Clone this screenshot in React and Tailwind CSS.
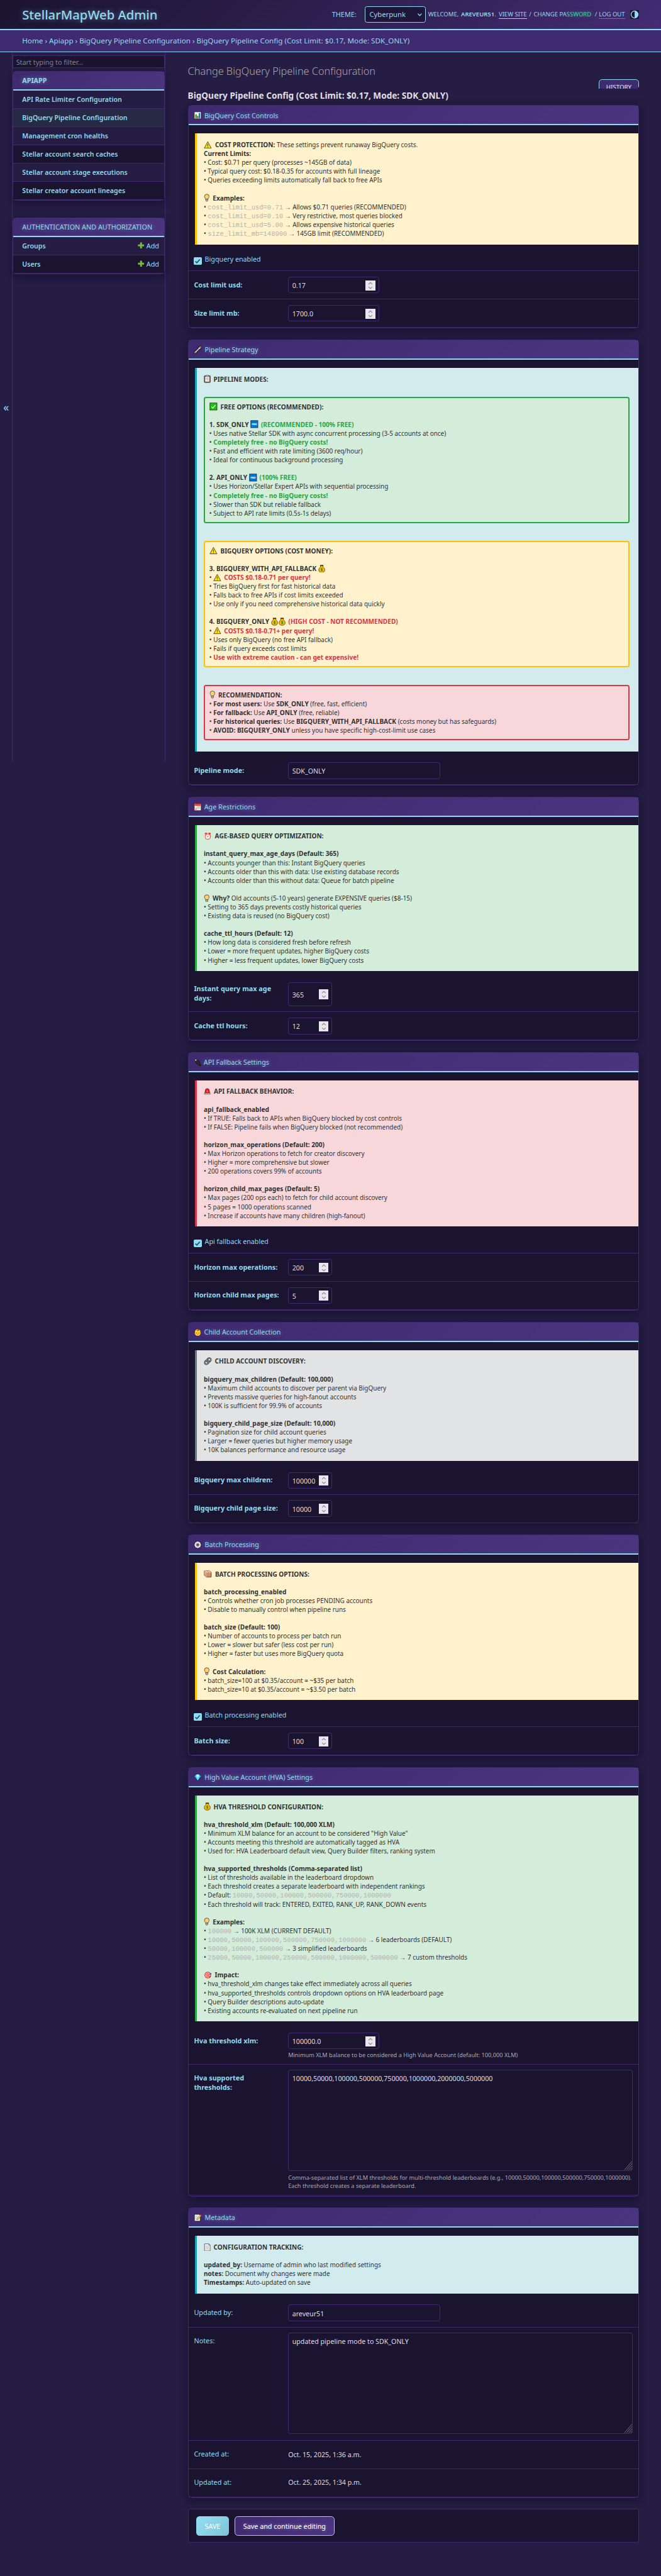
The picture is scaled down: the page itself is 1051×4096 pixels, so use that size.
import React from "react";

/* ---------- icons ---------- */
const Svg = ({ w, children, box = "0 0 16 16", size = "h-[14.5px] w-[14.5px]" }) => (
  <span className="inline-flex h-[16px] items-center align-top" style={{ width: w }}>
    <svg viewBox={box} className={`${size} shrink-0`}>{children}</svg>
  </span>
);
const Em = ({ w, children }) => (
  <span
    className="inline-block h-[16px] align-top text-[11.6px] leading-[17px] whitespace-nowrap font-normal"
    style={{ width: w, textShadow: "none" }}
  >
    {children}
  </span>
);
const Warn = ({ w = 20 }) => (
  <Svg w={w}>
    <path d="M8 1.6 15 14.6H1Z" fill="#fce100" stroke="#3b3a39" strokeWidth="1.1" strokeLinejoin="round" />
    <path d="M8 6v4.6M8 12v1.3" stroke="#3b3a39" strokeWidth="1.3" />
  </Svg>
);
const Check = ({ w = 20 }) => (
  <Svg w={w}>
    <rect x="1" y="1" width="14" height="14" fill="#16c60c" stroke="#1b3a1b" strokeWidth="1.1" />
    <path d="M4 8.4 6.8 11 12 5.2" fill="none" stroke="#fff" strokeWidth="1.6" />
  </Svg>
);
const Free = ({ w = 16 }) => (
  <Svg w={w}>
    <rect x="1" y="1" width="14" height="14" fill="#0078d7" stroke="#12304d" strokeWidth="1.1" />
    <text x="8" y="9.8" textAnchor="middle" fontSize="4.6" fontWeight="800" fill="#fff">FREE</text>
  </Svg>
);
const Bulb = ({ w = 16 }) => (
  <Svg w={w} box="0 0 12 16" size="h-[14.5px] w-[10.9px]">
    <path d="M6 1a4.500 4.500 0 0 1 4.600 4.600c0 2.400-2 3.300-2.200 5.400H3.600C3.400 8.900 1.400 8 1.400 5.600A4.500 4.500 0 0 1 6 1Z" fill="#ffd071" stroke="#4a3b1c" strokeWidth="1" />
    <path d="M4 11h4v2.700L7.200 15H4.800L4 13.700Z" fill="#c9c9c9" stroke="#333" strokeWidth=".9" />
  </Svg>
);
const Clipboard = ({ w = 17.7 }) => (
  <Svg w={w} box="0 0 14 16" size="h-[14.5px] w-[12.7px]">
    <rect x="1" y="1.800" width="12" height="13.400" rx="1" fill="#8e562e" stroke="#3e352f" strokeWidth="1" />
    <path d="M2.800 3.600h8.400v10H2.800Z" fill="#f2f2f2" />
    <rect x="4.300" y=".7" width="5.400" height="3" rx=".8" fill="#b8b8b8" stroke="#444" strokeWidth=".7" />
    <path d="M4.200 6.500h5.600M4.200 8.500h5.600M6 10.500h3.800" stroke="#9a9a9a" strokeWidth=".9" />
  </Svg>
);
const Page = ({ w = 17.6 }) => (
  <Svg w={w} box="0 0 14 16" size="h-[14.5px] w-[12.7px]">
    <path d="M1.500 1h8.600l2.600 2.500V15H1.500Z" fill="#f2f2f2" stroke="#4a4a4a" strokeWidth="1" />
    <path d="M10 1v2.700h2.700" fill="none" stroke="#4a4a4a" strokeWidth=".8" />
    <path d="M3.600 5.500h6.800M3.600 7.500h6.800M3.600 9.500h6.800M3.600 11.500h6.800" stroke="#bdbdbd" strokeWidth="1" />
  </Svg>
);
const Memo = ({ w = 20 }) => (
  <Svg w={w}>
    <path d="M1.500 1.200h9.800L13 3v11.800H1.500Z" fill="#f2f2f2" stroke="#222" strokeWidth="1" />
    <path d="M3.500 5h5M3.500 7.500h4.500M3.500 10h3" stroke="#b0b0b0" strokeWidth="1" />
    <path d="M6 12.300 6.600 10 13 2.300l2 1.700-6.500 7.600Z" fill="#ffc83d" stroke="#5a4210" strokeWidth=".6" />
    <path d="m13 2.300.9-1.100 2 1.700L15 4Z" fill="#d13438" />
  </Svg>
);
const Chart = ({ w = 19.2 }) => (
  <Svg w={w}>
    <rect x="1" y="1" width="14" height="14" rx=".6" fill="#f2f2f2" stroke="#2a2733" strokeWidth="1.400" />
    <path d="M3.200 6H6v8H3.200Z" fill="#16a80c" />
    <path d="M6.700 9h2.700v5H6.700Z" fill="#e03a20" />
    <path d="M10.100 3.500h2.700V14h-2.700Z" fill="#0078d7" />
  </Svg>
);
const Wrench = ({ w = 20 }) => (
  <Svg w={w}>
    <g fill="none" strokeLinecap="round">
      <path d="M4.300 11.700 11.700 4.300" stroke="#17151c" strokeWidth="4.400" />
      <path d="M13.800 1.600c-2.900-.6-4.800 1.900-3.600 4.200M14.400 2.200c.6 2.900-1.900 4.800-4.200 3.600" stroke="#17151c" strokeWidth="2.800" />
      <path d="M2.200 14.400c-1.400-1.600-.2-4 2-3.600M1.600 13.800c1.600 1.400 4 .2 3.600-2" stroke="#17151c" strokeWidth="2.800" />
      <path d="M4.300 11.700 11.700 4.300" stroke="#cfcfcf" strokeWidth="2.200" />
      <path d="M13.600 1.900c-2.600-.4-4 1.700-3.200 3.700M14.100 2.400c.4 2.600-1.700 4-3.700 3.200" stroke="#cfcfcf" strokeWidth="1.200" />
      <path d="M2.300 14c-1.100-1.300-.2-3 1.700-2.700M2 13.700c1.300 1.100 3 .2 2.700-1.700" stroke="#cfcfcf" strokeWidth="1.200" />
    </g>
  </Svg>
);
const Calendar = ({ w = 19 }) => (
  <Svg w={w}>
    <rect x="1" y="1" width="14" height="14" rx=".6" fill="#f2f2f2" stroke="#2a2024" strokeWidth="1.300" />
    <path d="M1.600 1.600h12.800v3.700H1.600Z" fill="#e83a17" />
    <path d="M7 7h5.800M3.400 9h9.400M3.400 11h9.400" stroke="#c4c4c4" strokeWidth="1.400" />
    <path d="M3.400 11.300h2.200v1.900H3.400Z" fill="#e05a4a" />
  </Svg>
);
const Siren = ({ w = 18.3 }) => (
  <Svg w={w} box="0 0 14 16" size="h-[14.5px] w-[12.7px]">
    <path d="M2 11.800 3.300 5C3.600 3.300 5 2.400 7 2.400s3.400.9 3.700 2.600L12 11.800Z" fill="#e81224" stroke="#4d1a1f" strokeWidth=".9" />
    <path d="M5 9.500 5.800 6h2.400L9 9.500Z" fill="#ff6b4a" />
    <path d="M1 11.500h12v2.300H1Z" fill="#c8c8c8" stroke="#6a6a6a" strokeWidth=".8" />
  </Svg>
);
const Box = ({ w = 20.3 }) => (
  <Svg w={w}>
    <path d="M1 2.500 10.500 1.600 15 5v9.600H5.500L1 11Z" fill="#c69268" stroke="#4a382c" strokeWidth="1" strokeLinejoin="round" />
    <path d="M1 2.500 5.500 5.600H15L10.500 1.600Z" fill="#ecc9ad" />
    <path d="M1 2.500 5.500 5.600v9L1 11Z" fill="#dca78a" />
    <path d="M7 2.100 10.500 5.600M2 9.700l2 1.500" stroke="#e2506a" strokeWidth="1.100" />
  </Svg>
);
const Gem = ({ w = 19.7 }) => (
  <Svg w={w}>
    <path d="M4 1.500h8l3.200 4.200L8 15 .8 5.700Z" fill="#1bb0f2" stroke="#0d2238" strokeWidth="1.100" strokeLinejoin="round" />
    <path d="M5.500 2h5l1 3.700L8 13.500 4.500 5.700Z" fill="#7fe0ff" />
    <path d="M6.500 2.200h3l.6 3.400H5.900Z" fill="#e4faff" />
  </Svg>
);
const Bag = ({ w = 14.3 }) => (
  <Svg w={w} box="1 0 14 16" size="h-[14.5px] w-[12.7px]">
    <path d="M5 1h6l-.6 3.4C12.6 5.6 14 8 14 10.600c0 2.800-2 4.700-6 4.700s-6-1.900-6-4.700C2 8 3.400 5.600 5.600 4.400Z" fill="#ffb900" stroke="#4d3a10" strokeWidth="1" />
    <path d="M5.200 1h5.600v1.600H5.200Z" fill="#3b2b0c" />
    <path d="M9.800 7.900c-.5-.8-3.400-1-3.400.5 0 1.700 3.400.8 3.400 2.500 0 1.500-3 1.400-3.600.4M8 6.500v6.300" fill="none" stroke="#10893e" strokeWidth="1.200" />
  </Svg>
);
const Gear = ({ w = 20 }) => (
  <Svg w={w}>
    <circle cx="8" cy="8" r="6" fill="#e6e6e6" stroke="#1c1c1c" strokeWidth="3" strokeDasharray="3 1.700" />
    <circle cx="8" cy="8" r="5.600" fill="#e6e6e6" stroke="#e6e6e6" strokeWidth="1.400" />
    <circle cx="8" cy="8" r="2.900" fill="#9a9a9a" stroke="#555" strokeWidth=".8" />
    <circle cx="8" cy="8" r="1.300" fill="#1c1c1c" />
  </Svg>
);
const Plug = ({ w = 18 }) => (
  <Svg w={w}>
    <path d="M1.500 2.500 4 .8l3 3-2.500 2.300Z" fill="#bdbdbd" stroke="#161616" strokeWidth="1" />
    <path d="M4 6.200 7.200 3.400c2.200.6 4.500 3 5.300 6.400l1.700 5.200-2.500.2-1.600-2.600C7 12.200 4.600 9.600 4 6.200Z" fill="#2b2b2b" stroke="#0c0c0c" strokeWidth="1" />
  </Svg>
);
const Chain = ({ w = 20 }) => (
  <Svg w={w}>
    <g fill="none" transform="rotate(-45 8 8)">
      <rect x=".6" y="4.600" width="9" height="6.800" rx="3.400" stroke="#222" strokeWidth="2.600" />
      <rect x="6.400" y="4.600" width="9" height="6.800" rx="3.400" stroke="#222" strokeWidth="2.600" />
      <rect x=".6" y="4.600" width="9" height="6.800" rx="3.400" stroke="#b5b5b5" strokeWidth="1" />
      <rect x="6.400" y="4.600" width="9" height="6.800" rx="3.400" stroke="#b5b5b5" strokeWidth="1" />
    </g>
  </Svg>
);

/* ---------- text helpers ---------- */
const B = ({ children }) => <b className="text-[11.45px] font-bold">{children}</b>;
const G = ({ children }) => <b className="text-[11.45px] font-bold text-[#28a745]">{children}</b>;
const R = ({ children }) => <b className="text-[11.45px] font-bold text-[#dc3545]">{children}</b>;
const C = ({ children }) => (
  <code className="font-['Liberation_Mono',monospace] text-[11.93px] leading-none text-[#b4b2ae]">{children}</code>
);
const Lines = ({ items }) =>
  items.map((l, i) => (
    <div key={i} className="h-[16px] text-[11.3px] leading-[17.200px] whitespace-nowrap text-[#333333]">
      {l}
    </div>
  ));

const infoTone = {
  yellow: "bg-[#fff2cd] border-[#ffc107]",
  blue: "bg-[#d1ebef] border-[#17a2b8]",
  green: "bg-[#d4ecda] border-[#28a745]",
  red: "bg-[#f7d7da] border-[#dc3545]",
  gray: "bg-[#e2e3e5] border-[#6c757d]",
};
const Info = ({ tone, children }) => (
  <div className={`mt-[15px] ml-[12px] border-l-4 pt-[12px] pr-[16px] pb-[12px] pl-[12.300px] ${infoTone[tone]}`}>{children}</div>
);
const SubBox = ({ tone, h, children }) => (
  <div className={`rounded-[4px] border-[2.300px] py-[7.800px] pl-[7.800px] ${h} ${infoTone[tone]}`}>{children}</div>
);

/* ---------- form pieces ---------- */
const Spinner = () => (
  <span className="-mt-[1px] flex h-[18px] w-[18px] items-center justify-center bg-[#e9e7ee]">
    <svg viewBox="0 0 18 18" className="h-[18px] w-[18px]" fill="none" stroke="#97939f" strokeWidth="1.500">
      <path d="M5.700 6.700 9 3.700l3.300 3M5.700 11.600 9 14.600l3.300-3" />
    </svg>
  </span>
);
const Field = ({ children, w, h = "h-[30px]", spin }) => (
  <div className={`flex items-center justify-between rounded-[4px] border border-[#3f2b70] pt-[2px] pr-[5px] pl-[6.300px] text-[12.120px] text-[#dedce4] ${w} ${h}`}>
    <span>{children}</span>
    {spin && <Spinner />}
  </div>
);
const Area = ({ children }) => (
  <div className="relative h-[182px] w-[622px] rounded-[4px] border border-[#3f2b70] px-[6.300px] pt-[6px] text-[12.120px] leading-[18px] text-[#dedce4]">
    {children}
    <svg viewBox="0 0 16 18" className="absolute right-0 bottom-0 h-[18px] w-[15px]" stroke="#a19daa" strokeWidth=".8">
      <path d="M1 18 16 1M5 18 16 5.500M9 18 16 10M13 18l3-3.500" />
    </svg>
  </div>
);
const Row = ({ label, first, h = "h-[51px]", firstH = "h-[61px]", light, labelPad = "h-[30px]", children }) => (
  <div className={`flex border-b border-[#3a2869] pl-[10px] ${first ? "pt-[20px] " + firstH : "pt-[10px] " + h}`}>
    <div
      className={`flex w-[170px] shrink-0 items-center pr-[14px] leading-[17px] text-[#92daee] ${labelPad} ${light ? "text-[12.300px]" : "text-[12.320px] font-bold"}`}
    >
      {label}
    </div>
    <div>{children}</div>
  </div>
);
const Tick = ({ label }) => (
  <div className="flex h-[48.500px] border-b border-[#3a2869] pt-[20px] pl-[10px]">
    <span className="mt-[3px] flex h-[14px] w-[14px] items-center justify-center rounded-[2px] bg-[#8fdcf2]">
      <svg viewBox="0 0 14 14" className="h-[14px] w-[14px]" fill="none" stroke="#1d4a5a" strokeWidth="1.900">
        <path d="M3 7.400 5.700 10 11 4" />
      </svg>
    </span>
    <span className="ml-[5.500px] h-[16px] text-[12.200px] leading-[15.500px] text-[#92daee]">{label}</span>
  </div>
);
const Card = ({ icon, title, h, children }) => (
  <section className={`mb-[20px] rounded-[8px] border border-[#3f2b70] bg-[#1b1430] shadow-[0_4px_15px_rgba(10,5,25,0.5)] ${h}`}>
    <h2 className="flex h-[35px] items-center border-b-[2.300px] border-[#8fdaf0] bg-linear-135 from-[#3f2a70] to-[#4c3580] pt-[2px] pl-[9.500px] text-[12.200px] text-[#92daee] [text-shadow:0_0_8px_rgba(146,218,238,0.500)]">
      <span className="flex leading-[16px]">
        {icon}
        {title}
      </span>
    </h2>
    {children}
  </section>
);

/* ---------- sidebar ---------- */
const Caption = ({ children, bold }) => (
  <div className={`flex h-[34px] items-center border-b-[2.300px] border-[#8fdaf0] bg-linear-135 from-[#3f2a70] to-[#4c3580] pt-[1px] pl-[16px] text-[#92daee] uppercase [text-shadow:0_0_8px_rgba(146,218,238,0.500)] ${bold ? "text-[12.200px] font-bold" : "text-[12.270px]"}`}>
    {children}
  </div>
);
const rowTone = { a: "bg-[#251d43]", b: "bg-[#1b1430]", on: "bg-[#262a45]" };
const NavRow = ({ children, tone, add }) => (
  <div className={`flex h-[33px] items-center justify-between border-b border-[#3f2b70] pt-[2px] pr-[8.500px] pl-[16px] text-[12.070px] text-[#92daee] ${rowTone[tone]}`}>
    <span className="font-semibold">{children}</span>
    {add && (
      <span className="flex items-center text-[12.300px]">
        <svg viewBox="0 0 12 12" className="mr-[4px] mb-[3px] h-[12px] w-[12px]">
          <path d="M4.300.5h3.400v3.800h3.800v3.400H7.700v3.800H4.300V7.700H.5V4.300h3.800Z" fill="#70bf2b" />
        </svg>
        Add
      </span>
    )}
  </div>
);

export default function App() {
  return (
    <div className="h-[4650px] w-[1193.100px] overflow-hidden bg-[#251d43] font-['Noto_Sans',sans-serif] text-[#dedce4] [zoom:0.8809]">
      <header className="flex h-[54px] items-center justify-between border-b-[2.300px] border-[#8fdaf0] bg-linear-135 from-[#1b1430] to-[#432c73] pr-[40px] pl-[40px] text-[#92daee]">
        <div className="pt-[1px] text-[22.970px] font-medium [text-shadow:0_0_10px_rgba(146,218,238,0.500)]">StellarMapWeb Admin</div>
        <div className="flex items-center text-[10.800px] whitespace-nowrap">
          <span className="w-[59px] text-[12.300px]">THEME:</span>
          <span className="mr-[4.500px] flex h-[30px] w-[110px] items-center justify-between rounded-[4px] border border-[#8fdaf0] bg-[#1f163a] pt-[1px] pr-[4.500px] pl-[7.500px] text-[12.800px]">
            Cyberpunk
            <svg viewBox="0 0 10 10" className="h-[10px] w-[10px]" fill="none" stroke="#92daee" strokeWidth="1.500">
              <path d="M1.500 3 5 6.500 8.500 3" />
            </svg>
          </span>
          <span className="w-[59.500px]">WELCOME,</span>
          <span className="w-[68px] font-semibold">
            AREVEUR51<span className="font-normal">.</span>
          </span>
          <span className="w-[51px] border-b border-[#8fdaf0] leading-[15px]">VIEW SITE</span>
          <span className="w-[12px] text-center">/</span>
          <span className="w-[107px]">
            CHANGE PA<span className="text-[#3fd6a0] [text-shadow:0_0_8px_rgba(40,200,130,0.600)]">SSWORD</span>
          </span>
          <span className="w-[11px] text-center">/</span>
          <span className="w-[47px] border-b border-[#7a6a9c] leading-[15px]">LOG OUT</span>
          <span className="ml-[9px] flex h-[16px] w-[16px] items-center justify-center bg-[#1b1430]">
            <svg viewBox="0 0 16 16" className="h-[16px] w-[16px]">
              <circle cx="8" cy="8" r="6.300" fill="none" stroke="#8fdaf0" strokeWidth="1.500" />
              <path d="M8 1.700a6.300 6.300 0 0 1 0 12.600Z" fill="#8fdaf0" />
            </svg>
          </span>
        </div>
      </header>
      <nav className="flex h-[40px] items-center border-b border-[#8fdaf0] bg-[#402a70] pt-[1px] pl-[40px] text-[13.250px] whitespace-nowrap text-[#92daee]">
        Home › Apiapp › BigQuery Pipeline Configuration › BigQuery Pipeline Config (Cost Limit: $0.17, Mode: SDK_ONLY)
      </nav>

      <div className="flex">
        <div className="flex h-[1281px] w-[23px] shrink-0 items-center justify-center border-r border-[#3f2b70] text-[20px] text-[#8fdaf0]">«</div>
        <aside className="h-[1281px] w-[276px] shrink-0 border-r border-[#3f2b70] pt-[6px] pr-px">
          <div className="mb-[5px] flex h-[23px] items-center border border-[#3f2b70] bg-[#1b1430] pt-[2px] pl-[5px] text-[12.330px] text-[#85808f]">
            Start typing to filter...
          </div>
          <div className="mb-[30.500px] h-[234px] rounded-[8px] border border-[#3f2b70] shadow-[0_4px_15px_rgba(10,5,25,0.400)]">
            <Caption bold>Apiapp</Caption>
            <NavRow tone="a">API Rate Limiter Configuration</NavRow>
            <NavRow tone="on">BigQuery Pipeline Configuration</NavRow>
            <NavRow tone="a">Management cron healths</NavRow>
            <NavRow tone="b">Stellar account search caches</NavRow>
            <NavRow tone="a">Stellar account stage executions</NavRow>
            <NavRow tone="b">Stellar creator account lineages</NavRow>
          </div>
          <div className="h-[102px] rounded-[8px] border border-[#3f2b70] shadow-[0_4px_15px_rgba(10,5,25,0.400)]">
            <Caption>Authentication and Authorization</Caption>
            <NavRow tone="a" add>Groups</NavRow>
            <NavRow tone="b" add>Users</NavRow>
          </div>
        </aside>

        <main className="ml-[40px] w-[814px] shrink-0">
          <h1 className="h-[49px] pt-[23px] text-[18.500px] leading-[24px] font-light text-[#aaa6ae]">Change BigQuery Pipeline Configuration</h1>
          <div className="flex h-[17px] justify-end overflow-hidden rounded-b-[5px]">
            <span className="h-[30px] w-[72px] rounded-[6px] border border-[#8fdaf0] bg-[#3f2b70] text-center text-[11.100px] leading-[28px] text-[#ecebf2]">HISTORY</span>
          </div>
          <h2 className="h-[30px] pt-[2px] text-[15.450px] leading-[20px] font-bold text-[#e0dfe4]">
            BigQuery Pipeline Config (Cost Limit: $0.17, Mode: SDK_ONLY)
          </h2>

          <Card h="h-[403px]" icon={<Chart />} title="BigQuery Cost Controls">
            <Info tone="yellow">
              <Lines
                items={[
                  <><Warn w={20.3} /><B>COST PROTECTION:</B> These settings prevent runaway BigQuery costs.</>,
                  <B>Current Limits:</B>,
                  "• Cost: $0.71 per query (processes ~145GB of data)",
                  "• Typical query cost: $0.18-0.35 for accounts with full lineage",
                  "• Queries exceeding limits automatically fall back to free APIs",
                  "",
                  <><Bulb w={16.3} /><B>Examples:</B></>,
                  <>• <C>cost_limit_usd=0.71</C> → Allows $0.71 queries (RECOMMENDED)</>,
                  <>• <C>cost_limit_usd=0.10</C> → Very restrictive, most queries blocked</>,
                  <>• <C>cost_limit_usd=5.00</C> → Allows expensive historical queries</>,
                  <>• <C>size_limit_mb=148900</C> → 145GB limit (RECOMMENDED)</>,
                ]}
              />
            </Info>
            <Tick label="Bigquery enabled" />
            <Row label="Cost limit usd:"><Field w="w-[164px]" spin>0.17</Field></Row>
            <Row label="Size limit mb:"><Field w="w-[164px]" spin>1700.0</Field></Row>
          </Card>

          <Card h="h-[805px]" icon={<Wrench />} title="Pipeline Strategy">
            <Info tone="blue">
              <div className="h-[40px]">
                <Lines items={[<><Clipboard /><B>PIPELINE MODES:</B></>]} />
              </div>
              <SubBox tone="green" h="h-[228px]">
                <Lines
                  items={[
                    <><Check /><B>FREE OPTIONS (RECOMMENDED):</B></>,
                    "",
                    <><B>1. SDK_ONLY</B> <Free /> <G>(RECOMMENDED - 100% FREE)</G></>,
                    "• Uses native Stellar SDK with async concurrent processing (3-5 accounts at once)",
                    <>• <G>Completely free - no BigQuery costs!</G></>,
                    "• Fast and efficient with rate limiting (3600 req/hour)",
                    "• Ideal for continuous background processing",
                    "",
                    <><B>2. API_ONLY</B> <Free /> <G>(100% FREE)</G></>,
                    "• Uses Horizon/Stellar Expert APIs with sequential processing",
                    <>• <G>Completely free - no BigQuery costs!</G></>,
                    "• Slower than SDK but reliable fallback",
                    "• Subject to API rate limits (0.5s-1s delays)",
                  ]}
                />
              </SubBox>
              <div className="h-[32px]" />
              <SubBox tone="yellow" h="h-[228px]">
                <Lines
                  items={[
                    <><Warn w={20} /><B>BIGQUERY OPTIONS (COST MONEY):</B></>,
                    "",
                    <><B>3. BIGQUERY_WITH_API_FALLBACK</B> <Bag /></>,
                    <>• <Warn w={19.500} /><R>COSTS $0.18-0.71 per query!</R></>,
                    "• Tries BigQuery first for fast historical data",
                    "• Falls back to free APIs if cost limits exceeded",
                    "• Use only if you need comprehensive historical data quickly",
                    "",
                    <><B>4. BIGQUERY_ONLY</B> <Bag /><Bag /> <R>(HIGH COST - NOT RECOMMENDED)</R></>,
                    <>• <Warn w={19.500} /><R>COSTS $0.18-0.71+ per query!</R></>,
                    "• Uses only BigQuery (no free API fallback)",
                    "• Fails if query exceeds cost limits",
                    <>• <R>Use with extreme caution - can get expensive!</R></>,
                  ]}
                />
              </SubBox>
              <div className="h-[32px]" />
              <div className="h-[108px]">
                <SubBox tone="red" h="h-[100px]">
                  <Lines
                    items={[
                      <><Bulb /><B>RECOMMENDATION:</B></>,
                      <>• <B>For most users:</B> Use <B>SDK_ONLY</B> (free, fast, efficient)</>,
                      <>• <B>For fallback:</B> Use <B>API_ONLY</B> (free, reliable)</>,
                      <>• <B>For historical queries:</B> Use <B>BIGQUERY_WITH_API_FALLBACK</B> (costs money but has safeguards)</>,
                      <>• <B>AVOID:</B> <B>BIGQUERY_ONLY</B> unless you have specific high-cost-limit use cases</>,
                    ]}
                  />
                </SubBox>
              </div>
            </Info>
            <Row first label="Pipeline mode:"><Field w="w-[274px]">SDK_ONLY</Field></Row>
          </Card>

          <Card h="h-[441px]" icon={<Calendar />} title="Age Restrictions">
            <Info tone="green">
              <Lines
                items={[
                  <><Em w={20}>⏰</Em><B>AGE-BASED QUERY OPTIMIZATION:</B></>,
                  "",
                  <B>instant_query_max_age_days (Default: 365)</B>,
                  "• Accounts younger than this: Instant BigQuery queries",
                  "• Accounts older than this with data: Use existing database records",
                  "• Accounts older than this without data: Queue for batch pipeline",
                  "",
                  <><Bulb /><B>Why?</B> Old accounts (5-10 years) generate EXPENSIVE queries ($8-15)</>,
                  "• Setting to 365 days prevents costly historical queries",
                  "• Existing data is reused (no BigQuery cost)",
                  "",
                  <B>cache_ttl_hours (Default: 12)</B>,
                  "• How long data is considered fresh before refresh",
                  "• Lower = more frequent updates, higher BigQuery costs",
                  "• Higher = less frequent updates, lower BigQuery costs",
                ]}
              />
            </Info>
            <Row first firstH="h-[74px]" labelPad="h-[42px]" label={<span>Instant query max age<br />days:</span>}>
              <Field w="w-[79px]" h="h-[43px]" spin>365</Field>
            </Row>
            <Row label="Cache ttl hours:"><Field w="w-[79px]" spin>12</Field></Row>
          </Card>

          <Card h="h-[467px]" icon={<Plug />} title="API Fallback Settings">
            <Info tone="red">
              <Lines
                items={[
                  <><Siren /><B>API FALLBACK BEHAVIOR:</B></>,
                  "",
                  <B>api_fallback_enabled</B>,
                  "• If TRUE: Falls back to APIs when BigQuery blocked by cost controls",
                  "• If FALSE: Pipeline fails when BigQuery blocked (not recommended)",
                  "",
                  <B>horizon_max_operations (Default: 200)</B>,
                  "• Max Horizon operations to fetch for creator discovery",
                  "• Higher = more comprehensive but slower",
                  "• 200 operations covers 99% of accounts",
                  "",
                  <B>horizon_child_max_pages (Default: 5)</B>,
                  "• Max pages (200 ops each) to fetch for child account discovery",
                  "• 5 pages = 1000 operations scanned",
                  "• Increase if accounts have many children (high-fanout)",
                ]}
              />
            </Info>
            <Tick label="Api fallback enabled" />
            <Row label={<span className="whitespace-nowrap">Horizon max operations:</span>}><Field w="w-[79px]" spin>200</Field></Row>
            <Row label={<span className="whitespace-nowrap">Horizon child max pages:</span>}><Field w="w-[79px]" spin>5</Field></Row>
          </Card>

          <Card h="h-[364px]" icon={<Em w={18.9}>👶</Em>} title="Child Account Collection">
            <Info tone="gray">
              <Lines
                items={[
                  <><Chain /><B>CHILD ACCOUNT DISCOVERY:</B></>,
                  "",
                  <B>bigquery_max_children (Default: 100,000)</B>,
                  "• Maximum child accounts to discover per parent via BigQuery",
                  "• Prevents massive queries for high-fanout accounts",
                  "• 100K is sufficient for 99.9% of accounts",
                  "",
                  <B>bigquery_child_page_size (Default: 10,000)</B>,
                  "• Pagination size for child account queries",
                  "• Larger = fewer queries but higher memory usage",
                  "• 10K balances performance and resource usage",
                ]}
              />
            </Info>
            <Row first label={<span className="whitespace-nowrap">Bigquery max children:</span>}><Field w="w-[79px]" spin>100000</Field></Row>
            <Row label={<span className="whitespace-nowrap">Bigquery child page size:</span>}><Field w="w-[79px]" spin>10000</Field></Row>
          </Card>

          <Card h="h-[400px]" icon={<Gear />} title="Batch Processing">
            <Info tone="yellow">
              <Lines
                items={[
                  <><Box /><B>BATCH PROCESSING OPTIONS:</B></>,
                  "",
                  <B>batch_processing_enabled</B>,
                  "• Controls whether cron job processes PENDING accounts",
                  "• Disable to manually control when pipeline runs",
                  "",
                  <B>batch_size (Default: 100)</B>,
                  "• Number of accounts to process per batch run",
                  "• Lower = slower but safer (less cost per run)",
                  "• Higher = faster but uses more BigQuery quota",
                  "",
                  <><Bulb /><B>Cost Calculation:</B></>,
                  "• batch_size=100 at $0.35/account = ~$35 per batch",
                  "• batch_size=10 at $0.35/account = ~$3.50 per batch",
                ]}
              />
            </Info>
            <Tick label="Batch processing enabled" />
            <Row label="Batch size:"><Field w="w-[79px]" spin>100</Field></Row>
          </Card>

          <Card h="h-[775px]" icon={<Gem />} title="High Value Account (HVA) Settings">
            <Info tone="green">
              <Lines
                items={[
                  <><Bag w={17.6} /><B>HVA THRESHOLD CONFIGURATION:</B></>,
                  "",
                  <B>hva_threshold_xlm (Default: 100,000 XLM)</B>,
                  "• Minimum XLM balance for an account to be considered \"High Value\"",
                  "• Accounts meeting this threshold are automatically tagged as HVA",
                  "• Used for: HVA Leaderboard default view, Query Builder filters, ranking system",
                  "",
                  <B>hva_supported_thresholds (Comma-separated list)</B>,
                  "• List of thresholds available in the leaderboard dropdown",
                  "• Each threshold creates a separate leaderboard with independent rankings",
                  <>• Default: <C>10000,50000,100000,500000,750000,1000000</C></>,
                  "• Each threshold will track: ENTERED, EXITED, RANK_UP, RANK_DOWN events",
                  "",
                  <><Bulb w={16.3} /><B>Examples:</B></>,
                  <>• <C>100000</C> → 100K XLM (CURRENT DEFAULT)</>,
                  <>• <C>10000,50000,100000,500000,750000,1000000</C> → 6 leaderboards (DEFAULT)</>,
                  <>• <C>50000,100000,500000</C> → 3 simplified leaderboards</>,
                  <>• <C>25000,50000,100000,250000,500000,1000000,5000000</C> → 7 custom thresholds</>,
                  "",
                  <><Em w={20}>🎯</Em><B>Impact:</B></>,
                  "• hva_threshold_xlm changes take effect immediately across all queries",
                  "• hva_supported_thresholds controls dropdown options on HVA leaderboard page",
                  "• Query Builder descriptions auto-update",
                  "• Existing accounts re-evaluated on next pipeline run",
                ]}
              />
            </Info>
            <Row first firstH="h-[77.500px]" label="Hva threshold xlm:">
              <Field w="w-[164px]" spin>100000.0</Field>
              <p className="mt-[3px] text-[10.440px] leading-[15px] text-[#a9a6b0]">
                Minimum XLM balance to be considered a High Value Account (default: 100,000 XLM)
              </p>
            </Row>
            <Row h="h-[237px]" labelPad="h-[47px]" label={<span>Hva supported<br />thresholds:</span>}>
              <Area>10000,50000,100000,500000,750000,1000000,2000000,5000000</Area>
              <p className="mt-[5px] text-[10.440px] leading-[15px] whitespace-nowrap text-[#a9a6b0]">
                Comma-separated list of XLM thresholds for multi-threshold leaderboards (e.g., 10000,50000,100000,500000,750000,1000000).
                <br />
                Each threshold creates a separate leaderboard.
              </p>
            </Row>
          </Card>

          <Card h="h-[524px]" icon={<Memo />} title="Metadata">
            <Info tone="blue">
              <Lines
                items={[
                  <><Page /><B>CONFIGURATION TRACKING:</B></>,
                  "",
                  <><B>updated_by:</B> Username of admin who last modified settings</>,
                  <><B>notes:</B> Document why changes were made</>,
                  <><B>Timestamps:</B> Auto-updated on save</>,
                ]}
              />
            </Info>
            <Row light first label="Updated by:"><Field w="w-[274px]">areveur51</Field></Row>
            <Row light h="h-[204.500px]" label="Notes:"><Area>updated pipeline mode to SDK_ONLY</Area></Row>
            <Row light label="Created at:"><p className="text-[12.100px] leading-[30px]">Oct. 15, 2025, 1:36 a.m.</p></Row>
            <Row light label="Updated at:"><p className="text-[12.100px] leading-[30px]">Oct. 25, 2025, 1:34 p.m.</p></Row>
          </Card>

          <div className="flex h-[61px] items-center gap-[10px] rounded-[4px] border border-[#3f2b70] bg-[#1b1430] pl-[14px] text-[12.250px] text-white">
            <span className="flex h-[35px] w-[59px] items-center justify-center rounded-[6px] bg-linear-135 from-[#96dff3] to-[#7cc4d8] pt-[2px]">SAVE</span>
            <span className="flex h-[35px] w-[181px] items-center justify-center rounded-[6px] border border-[#8fdaf0] bg-linear-135 from-[#3f2a70] to-[#4c3580] pt-[2px] [text-shadow:0_0_6px_rgba(255,255,255,0.400)]">
              Save and continue editing
            </span>
          </div>
        </main>
      </div>
    </div>
  );
}
